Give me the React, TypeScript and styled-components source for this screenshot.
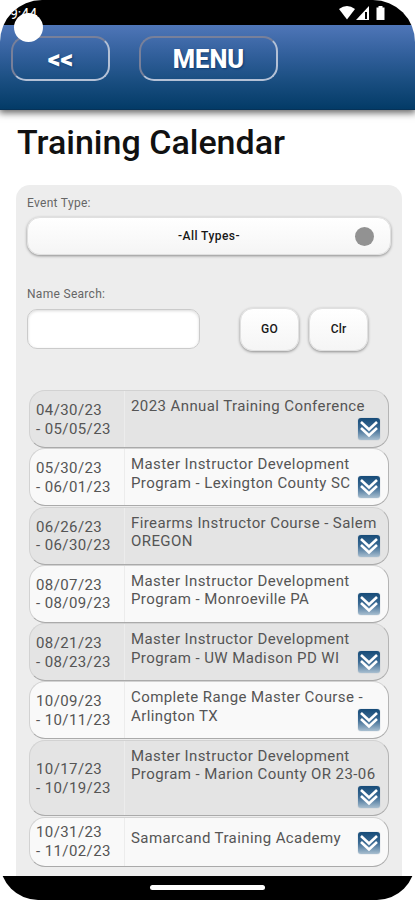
import React from "react";
import styled, { createGlobalStyle } from "styled-components";

const GlobalStyle = createGlobalStyle`
  * { box-sizing: border-box; }
  html, body { margin: 0; background: #fff; overflow: hidden; }
  body { font-family: Roboto, "Liberation Sans", sans-serif; }
`;

const Screen = styled.div`
  position: relative;
  display: flex;
  flex-direction: column;
  width: 415px;
  height: 900px;
  overflow: hidden;
  background: #fff;
  border-radius: 42px 42px 38px 38px;
`;

const StatusBar = styled.div`
  flex: none;
  display: flex;
  justify-content: space-between;
  height: 25px;
  padding: 5px 28px 0 10px;
  background: #000;
  color: #fff;
  font-size: 14px;
  line-height: 18px;
`;

const CameraDot = styled.div`
  position: absolute;
  left: 14px;
  top: 13px;
  width: 29px;
  height: 29px;
  border-radius: 50%;
  background: #fff;
  z-index: 2;
`;

const Header = styled.header`
  flex: none;
  display: flex;
  gap: 29px;
  height: 85px;
  padding: 11px 11px 0;
  background: linear-gradient(#4f76b8 0%, #315f9b 36%, #1b4f82 65%, #033b67 100%);
  border-bottom: 1px solid #063258;
  box-shadow: 0 2px 7px 1px rgba(0, 0, 0, 0.6);
`;

const NavButton = styled.button<{ $width: number; $size: number; $weight: number }>`
  width: ${(p) => p.$width}px;
  height: 45px;
  padding: 0;
  border: 2px solid;
  border-color: #78809a #b4c1d6 #b4c1d6 #78809a;
  border-radius: 15px;
  background: transparent;
  color: #fff;
  font: ${(p) => p.$weight} ${(p) => p.$size}px/43px Roboto, sans-serif;
  text-shadow: 1px 1px 2px #0b3a70;
`;

const Title = styled.h1`
  flex: none;
  margin: 12px 0 0 17px;
  color: #111;
  font-size: 34px;
  font-weight: 500;
  line-height: 40px;
`;

const Panel = styled.main`
  flex: 1;
  min-height: 0;
  margin: 23px 13px 0 16px;
  padding: 9px 10px 0;
  border-radius: 14px 14px 0 0;
  background: #ededed;
`;

const Label = styled.label`
  display: block;
  height: 18px;
  padding-left: 1px;
  color: #666;
  font-size: 12px;
  line-height: 18px;
  letter-spacing: 0.3px;
`;

const raised = `
  border: 1px solid #e0e0e0;
  background: linear-gradient(#fff, #f5f5f5);
  box-shadow: 0 1px 3px rgba(0, 0, 0, 0.42);
  color: #181818;
  font: 500 12px Roboto, sans-serif;
`;

const TypeSelect = styled.button`
  ${raised}
  display: grid;
  grid-template-columns: 1fr auto;
  align-items: center;
  width: 364px;
  height: 38px;
  margin: 5px 0 0 1px;
  padding: 0 16px 0 35px;
  border-radius: 13px;
  letter-spacing: 0.45px;
`;

const Dot = styled.span`
  width: 19px;
  height: 19px;
  border-radius: 50%;
  background: #929292;
`;

const SearchBlock = styled.section`
  margin-top: 30px;
`;

const SearchRow = styled.div`
  display: flex;
  align-items: center;
  height: 44px;
  margin: 4px 0 0 1px;
`;

const SearchInput = styled.input`
  width: 173px;
  height: 40px;
  margin-right: 40px;
  border: 1px solid #cbcbcb;
  border-radius: 10px;
  background: #fff;
  box-shadow: inset 0 1px 3px rgba(0, 0, 0, 0.15);
`;

const SmallButton = styled.button`
  ${raised}
  width: 59px;
  height: 43px;
  margin-right: 10px;
  border-radius: 13px;
  letter-spacing: 0.2px;
`;

const EventList = styled.div`
  margin: 39px 0 0 3px;
  width: 360px;
`;

const EventRow = styled.article<{ $shaded: boolean; $height: number }>`
  display: grid;
  grid-template-columns: 94px 1fr;
  height: ${(p) => p.$height}px;
  margin-bottom: 0.3px;
  border: 1px solid #d2d2d2;
  border-right-color: #b4b4b4;
  border-bottom-color: #aaa;
  border-radius: 16px;
  background: ${(p) => (p.$shaded ? "#e4e4e4" : "#f9f9f9")};
  color: #555;
  font-size: 15px;
  line-height: 18.6px;
`;

const Dates = styled.div`
  align-self: center;
  padding: 1px 0 0 6px;
  letter-spacing: 0.4px;
  white-space: pre-line;
`;

const Details = styled.div<{ $centered: boolean }>`
  display: flex;
  flex-direction: column;
  justify-content: ${(p) => (p.$centered ? "center" : "flex-start")};
  position: relative;
  padding: ${(p) => (p.$centered ? "0 0 6px 6px" : "6px 0 0 6px")};
  border-left: 1px solid #ececec;
  letter-spacing: 0.41px;
  white-space: pre;
`;

const Expand = styled.span<{ $bottom: number }>`
  position: absolute;
  right: 8px;
  bottom: ${(p) => p.$bottom}px;
  width: 22px;
  height: 22px;
  border-radius: 3px;
  background: linear-gradient(#164b78, #3c6b94 50%, #a9bfd0);
  box-shadow: 0 0 1px #8298ac;
  svg { display: block; }
`;

const NavigationBar = styled.footer`
  flex: none;
  display: flex;
  justify-content: center;
  height: 24px;
  padding-top: 9px;
  background: #000;
`;

const HomePill = styled.div`
  width: 115px;
  height: 5px;
  border-radius: 3px;
  background: #fff;
`;

const events = [
  { dates: "04/30/23\n- 05/05/23", title: "2023 Annual Training Conference", height: 58 },
  { dates: "05/30/23\n- 06/01/23", title: "Master Instructor Development\nProgram - Lexington County SC", height: 58 },
  { dates: "06/26/23\n- 06/30/23", title: "Firearms Instructor Course - Salem\nOREGON", height: 58 },
  { dates: "08/07/23\n- 08/09/23", title: "Master Instructor Development\nProgram - Monroeville PA", height: 58 },
  { dates: "08/21/23\n- 08/23/23", title: "Master Instructor Development\nProgram - UW Madison PD WI", height: 58 },
  { dates: "10/09/23\n- 10/11/23", title: "Complete Range Master Course -\nArlington TX", height: 58 },
  { dates: "10/17/23\n- 10/19/23", title: "Master Instructor Development\nProgram - Marion County OR 23-06", height: 76.5 },
  { dates: "10/31/23\n- 11/02/23", title: "Samarcand Training Academy", height: 50, centered: true },
];

const StatusIcons = () => (
  <svg width="48" height="16" viewBox="0 0 48 16" fill="#fff" aria-hidden="true">
    <path d="M0 4Q8-2 16 4L8 14.5Z" />
    <path d="M30 1V15H17Z" />
    <path d="M26 7h2v7h-2z" fill="#000" />
    <path d="M37.5 2.5h2V1h4v1.5h2V15h-8z" />
  </svg>
);

export default function App() {
  return (
    <>
      <GlobalStyle />
      <Screen>
        <StatusBar><span>9:44</span><StatusIcons /></StatusBar>
        <CameraDot />
        <Header>
          <NavButton $width={99} $size={25} $weight={900}>&lt;&lt;</NavButton>
          <NavButton $width={139} $size={25.5} $weight={800}>MENU</NavButton>
        </Header>
        <Title>Training Calendar</Title>
        <Panel>
          <Label>Event Type:</Label>
          <TypeSelect><span>-All Types-</span><Dot /></TypeSelect>
          <SearchBlock>
            <Label htmlFor="name">Name Search:</Label>
            <SearchRow>
              <SearchInput id="name" />
              <SmallButton>GO</SmallButton>
              <SmallButton>Clr</SmallButton>
            </SearchRow>
          </SearchBlock>
          <EventList>
            {events.map((event, index) => (
              <EventRow key={event.dates} $shaded={index % 2 === 0} $height={event.height}>
                <Dates>{event.dates}</Dates>
                <Details $centered={!!event.centered}>
                  {event.title}
                  <Expand $bottom={event.centered ? 12 : 7}>
                    <svg width="22" height="22" viewBox="0 0 22 22" fill="none" stroke="#fff" strokeWidth="2.6" aria-hidden="true">
                      <path d="M3 4L11 11.5L19 4M3 10L11 17.5L19 10" />
                    </svg>
                  </Expand>
                </Details>
              </EventRow>
            ))}
          </EventList>
        </Panel>
        <NavigationBar><HomePill /></NavigationBar>
      </Screen>
    </>
  );
}
